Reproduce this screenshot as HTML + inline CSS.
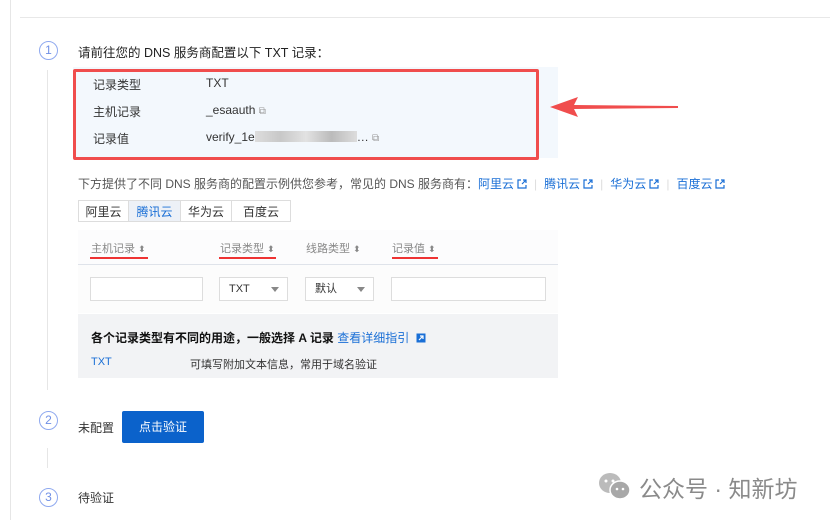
<!DOCTYPE html>
<html><head><meta charset="utf-8"><style>
body{margin:0;width:830px;height:520px;background:#fff;position:relative;overflow:hidden;font-family:"Liberation Sans","Noto Sans CJK SC",sans-serif;font-size:12px;color:#333}
.a{position:absolute;white-space:nowrap}
.c{position:absolute;width:17px;height:17px;border:1.3px solid #8fa9ef;border-radius:50%;color:#6f8fe6;font-size:12px;text-align:center;line-height:17px;box-sizing:content-box}
.lk{color:#1a6fd6}
.ext{display:inline-block;margin-left:3px;vertical-align:-1px}
.sep{color:#ddd;margin:0 7px}
.tab{position:absolute;top:200px;height:22px;line-height:22px;text-align:center;border:1px solid #ddd;box-sizing:border-box;color:#333}
.inp{position:absolute;top:277px;height:24px;border:1px solid #ddd;box-sizing:border-box;background:#fff;font-size:11px;line-height:22px;padding-left:9px}
.dd{position:absolute;right:8px;top:9px;width:0;height:0;border-left:4px solid transparent;border-right:4px solid transparent;border-top:5px solid #888}
.th{position:absolute;top:240px;color:#888;font-size:11px}
.ul{position:absolute;top:257px;height:2px;background:#e33}
</style></head><body>
<div class="a" style="left:10px;top:0;width:1px;height:520px;background:#e6e6e6"></div>
<div class="a" style="left:20px;top:17px;width:810px;height:1px;background:#e8e8e8"></div>

<div class="c" style="left:39px;top:41px">1</div>
<div class="a" style="left:78px;top:42px;font-size:12.5px;color:#222">请前往您的 DNS 服务商配置以下 TXT 记录：</div>
<div class="a" style="left:47px;top:70px;width:1px;height:320px;background:#e6e6e6"></div>

<div class="a" style="left:73px;top:67px;width:485px;height:91px;background:#f3f8fd"></div>
<div class="a" style="left:73px;top:69px;width:466px;height:91px;border:3px solid #f04d4d;border-radius:2px;box-sizing:border-box"></div>
<div class="a" style="left:93px;top:76px">记录类型</div><div class="a" style="left:206px;top:76px">TXT</div>
<div class="a" style="left:93px;top:103px">主机记录</div><div class="a" style="left:206px;top:103px">_esaauth <span style="color:#999;font-size:10px">⧉</span></div>
<div class="a" style="left:93px;top:130px">记录值</div><div class="a" style="left:206px;top:130px">verify_1e<span style="display:inline-block;width:102px;height:11px;background:linear-gradient(90deg,#ddd,#c8c8c8,#e2e2e2,#bbb,#ddd);vertical-align:-1px"></span>… <span style="color:#999;font-size:10px">⧉</span></div>

<svg class="a" style="left:548px;top:95px" width="132" height="24"><polygon points="2,12 30,2 26,10 130,11 130,13 26,14 30,22" fill="#f04d4d"/></svg>

<div class="a" style="left:78px;top:175px;color:#555">下方提供了不同 DNS 服务商的配置示例供您参考，常见的 DNS 服务商有：<span class="lk">阿里云<svg class="ext" width="10" height="10"><path d="M4 1H1v8h8V6M5 5l4-4M6 1h3v3" stroke="#1a6fd6" stroke-width="1.2" fill="none"/></svg></span><span class="sep">|</span><span class="lk">腾讯云<svg class="ext" width="10" height="10"><path d="M4 1H1v8h8V6M5 5l4-4M6 1h3v3" stroke="#1a6fd6" stroke-width="1.2" fill="none"/></svg></span><span class="sep">|</span><span class="lk">华为云<svg class="ext" width="10" height="10"><path d="M4 1H1v8h8V6M5 5l4-4M6 1h3v3" stroke="#1a6fd6" stroke-width="1.2" fill="none"/></svg></span><span class="sep">|</span><span class="lk">百度云<svg class="ext" width="10" height="10"><path d="M4 1H1v8h8V6M5 5l4-4M6 1h3v3" stroke="#1a6fd6" stroke-width="1.2" fill="none"/></svg></span></div>

<div class="tab" style="left:78px;width:51px">阿里云</div>
<div class="tab" style="left:128px;width:53px;background:#edf1f7;color:#1a6fd6">腾讯云</div>
<div class="tab" style="left:180px;width:52px">华为云</div>
<div class="tab" style="left:231px;width:60px">百度云</div>

<div class="a" style="left:78px;top:230px;width:480px;height:34px;background:#fcfcfd;border-bottom:1px solid #dfe3ea"></div>
<div class="th" style="left:91px">主机记录 <span style="font-size:9px">⬍</span></div><div class="ul" style="left:90px;width:58px"></div>
<div class="th" style="left:220px">记录类型 <span style="font-size:9px">⬍</span></div><div class="ul" style="left:219px;width:57px"></div>
<div class="th" style="left:306px">线路类型 <span style="font-size:9px">⬍</span></div>
<div class="th" style="left:392px">记录值 <span style="font-size:9px">⬍</span></div><div class="ul" style="left:392px;width:46px"></div>

<div class="a" style="left:78px;top:265px;width:480px;height:48px;background:#fcfcfc"></div>
<div class="inp" style="left:90px;width:113px"></div>
<div class="inp" style="left:219px;width:69px">TXT<span class="dd"></span></div>
<div class="inp" style="left:305px;width:69px">默认<span class="dd"></span></div>
<div class="inp" style="left:391px;width:155px"></div>

<div class="a" style="left:78px;top:314px;width:480px;height:64px;background:#f2f3f5"></div>
<div class="a" style="left:91px;top:329px;font-weight:bold;color:#111">各个记录类型有不同的用途，一般选择 A 记录 <span style="color:#1a6fd6;font-weight:normal">查看详细指引</span> <svg class="ext" width="10" height="10"><rect x="0.5" y="0.5" width="9" height="9" fill="#1a6fd6"/><path d="M3 7l4-4M4 3h3v3" stroke="#fff" stroke-width="1.2" fill="none"/></svg></div>
<div class="a" style="left:91px;top:356px;font-size:11px;color:#1a6fd6">TXT</div>
<div class="a" style="left:190px;top:356px;font-size:11px;color:#333">可填写附加文本信息，常用于域名验证</div>

<div class="c" style="left:39px;top:411px">2</div>
<div class="a" style="left:78px;top:419px">未配置</div>
<div class="a" style="left:122px;top:411px;width:82px;height:32px;background:#0b62cb;border-radius:2px;color:#fff;text-align:center;line-height:32px">点击验证</div>
<div class="a" style="left:47px;top:448px;width:1px;height:20px;background:#e6e6e6"></div>

<div class="c" style="left:39px;top:488px">3</div>
<div class="a" style="left:78px;top:489px">待验证</div>

<svg class="a" style="left:598px;top:471px" width="34" height="30"><ellipse cx="12" cy="12" rx="11" ry="10" fill="#bbb"/><ellipse cx="22" cy="19" rx="10" ry="9" fill="#a8a8a8" stroke="#fff" stroke-width="1.5"/><circle cx="8" cy="10" r="1.5" fill="#fff"/><circle cx="15" cy="10" r="1.5" fill="#fff"/><circle cx="19" cy="18" r="1.3" fill="#fff"/><circle cx="25" cy="18" r="1.3" fill="#fff"/></svg>
<div class="a" style="left:639px;top:470px;font-size:23px;color:#8a8a8a">公众号 · 知新坊</div>
</body></html>
